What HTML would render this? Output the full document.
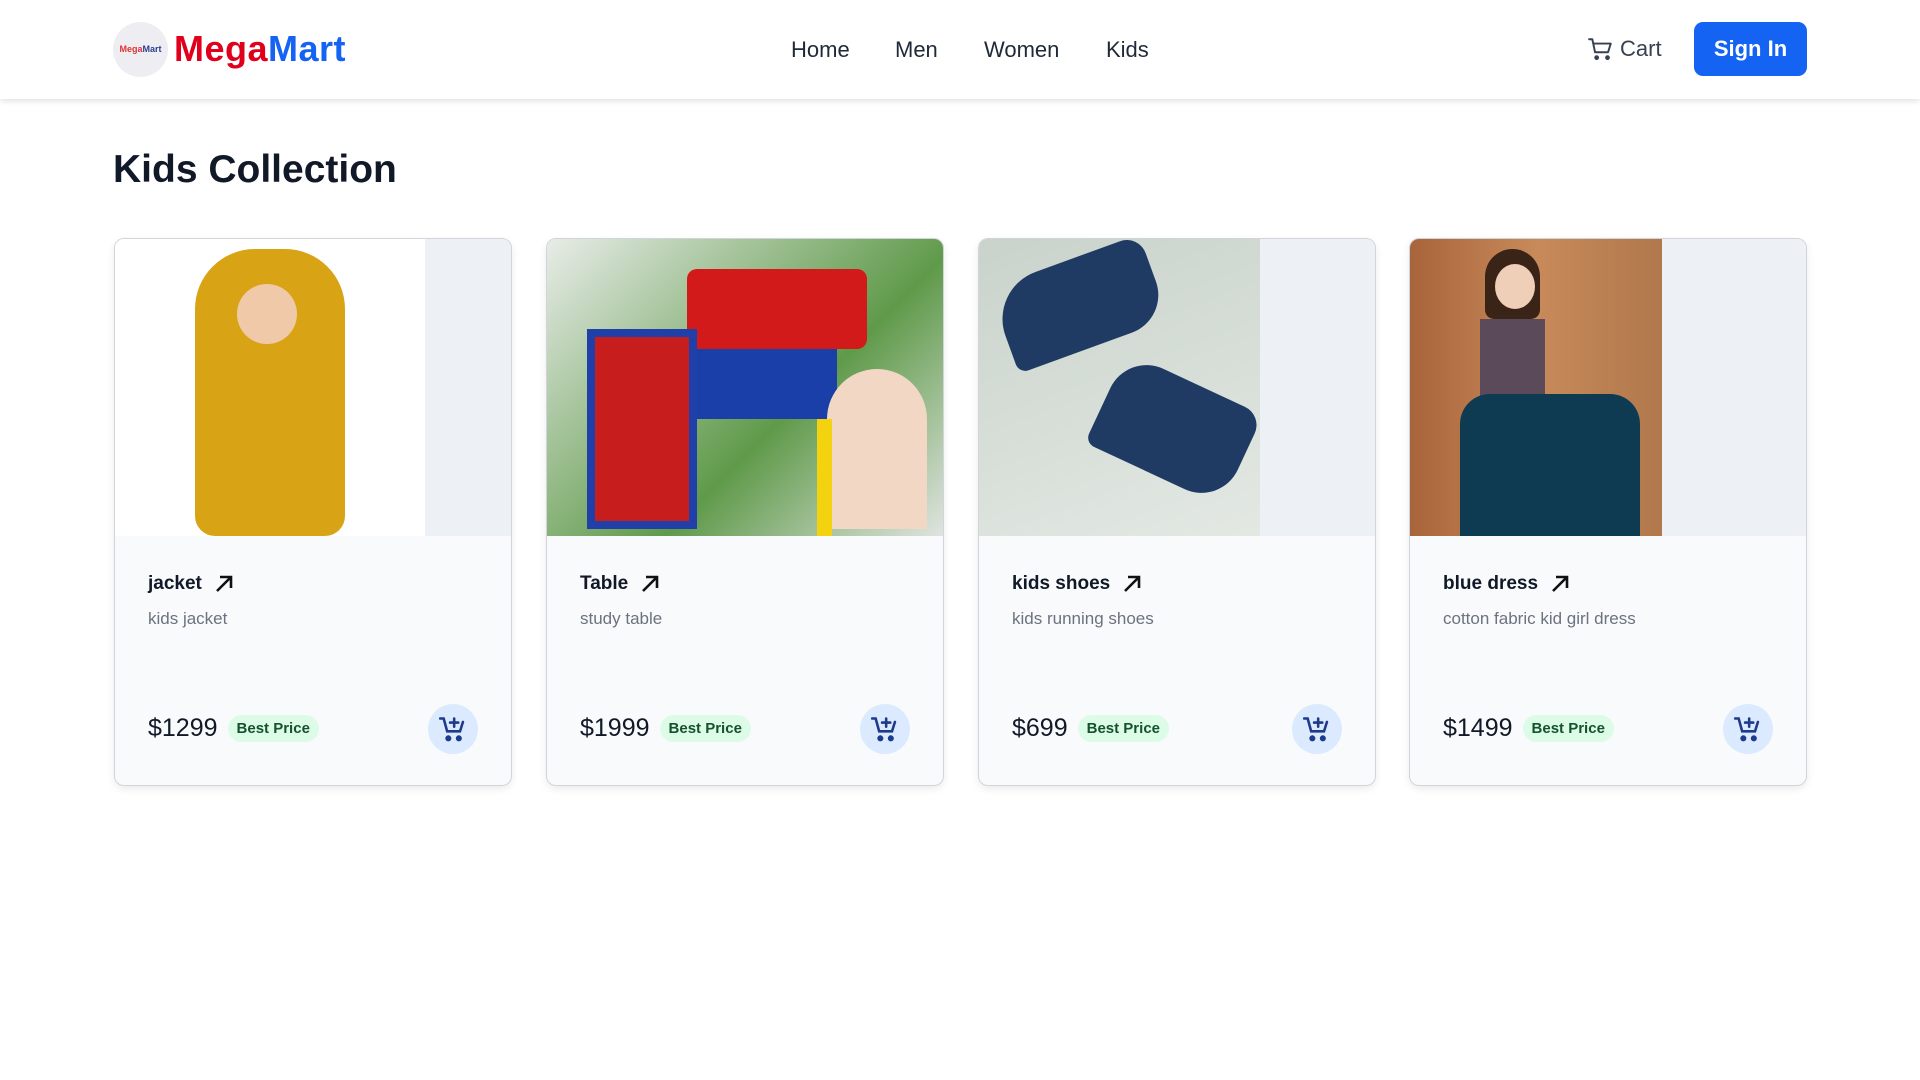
<!DOCTYPE html>
<html><head><meta charset="utf-8"><style>
*{box-sizing:border-box;margin:0;padding:0}
body{width:1920px;height:1080px;background:#fff;font-family:"Liberation Sans",sans-serif;position:relative;overflow:hidden;color:#111827}
.hdr{position:absolute;left:0;top:0;width:1920px;height:99px;background:#fff;box-shadow:0 2px 6px rgba(0,0,0,.12)}
.logo{position:absolute;left:113px;top:22px;width:55px;height:55px;border-radius:50%;background:#eeeef2;font-size:9px;font-weight:bold;line-height:55px;text-align:center;color:#d33}
.logo b{color:#2a3f8f}
.brand{position:absolute;left:174px;top:28px;font-size:36px;font-weight:bold;letter-spacing:0.5px}
.nav{position:absolute;top:37px;font-size:22px;color:#1f2937}
.cart{position:absolute;left:1588px;top:36px;font-size:22px;color:#374151;display:flex;align-items:center;gap:6px}
.sign{position:absolute;left:1694px;top:22px;width:113px;height:54px;border-radius:9px;background:#1463f3;color:#fff;font-size:22px;font-weight:bold;text-align:center;line-height:54px}
h1{position:absolute;left:113px;top:148px;font-size:39px;font-weight:600;color:#111827}
.card{position:absolute;top:238px;width:398px;height:548px;border:1px solid #d1d5db;border-radius:10px;background:#f9fafc;box-shadow:0 3px 8px rgba(0,0,0,.08);overflow:hidden}
.img{position:absolute;left:0;top:0;width:396px;height:297px;background:#edf1f6;overflow:hidden}
.t{position:absolute;left:33px;top:334px;font-size:19px;font-weight:bold;color:#111827;display:flex;align-items:center;gap:12px}
.d{position:absolute;left:33px;top:370px;font-size:17px;color:#6b7280}
.p{position:absolute;left:33px;top:475px;font-size:25px;color:#111827;display:flex;align-items:center;gap:10px}
.b{font-size:15px;font-weight:bold;background:#dcfce7;color:#14532d;border-radius:14px;padding:5px 9px}
.cb{position:absolute;left:313px;top:465px;width:50px;height:50px;border-radius:50%;background:#dbeafe;display:flex;align-items:center;justify-content:center}
</style></head><body>
<div class="hdr">
<div class="logo">Mega<b>Mart</b></div>
<div class="brand"><span style="color:#e0001b">Mega</span><span style="color:#1463f3">Mart</span></div>
<div class="nav" style="left:791px">Home</div>
<div class="nav" style="left:895px">Men</div>
<div class="nav" style="left:984px">Women</div>
<div class="nav" style="left:1106px">Kids</div>
<div class="cart"><svg width="26" height="26" viewBox="0 0 24 24" fill="none" stroke="#374151" stroke-width="1.8" stroke-linecap="round" stroke-linejoin="round"><path d="M1 3h3l2.5 12h12L21 7H5.5"/><circle cx="8" cy="20" r="1.3" fill="#374151"/><circle cx="18" cy="20" r="1.3" fill="#374151"/></svg>Cart</div>
<div class="sign">Sign In</div>
</div>
<h1>Kids Collection</h1>

<div class="card" style="left:114px">
<div class="img"><div style="position:absolute;left:0;top:0;width:310px;height:297px;background:#fff"></div>
<div style="position:absolute;left:80px;top:10px;width:150px;height:287px;background:#d9a316;border-radius:60px 60px 20px 20px"></div>
<div style="position:absolute;left:122px;top:45px;width:60px;height:60px;background:#f0c9a8;border-radius:50%"></div></div>
<div class="t">jacket <svg width="20" height="20" viewBox="0 0 20 20" stroke="#111" stroke-width="2.6" fill="none"><path d="M3 17L17 3M6 3h11v11"/></svg></div>
<div class="d">kids jacket</div>
<div class="p">$1299 <span class="b">Best Price</span></div>
<div class="cb"><svg width="28" height="28" viewBox="0 0 24 24" fill="none" stroke="#1e3a8a" stroke-width="2.2" stroke-linecap="round"><path d="M1 3h3l3 11h11l2.5-8"/><path d="M13 3v7M9.5 6.5h7"/><circle cx="8" cy="20" r="1.5" fill="#1e3a8a"/><circle cx="17" cy="20" r="1.5" fill="#1e3a8a"/></svg></div>
</div>

<div class="card" style="left:546px">
<div class="img" style="background:linear-gradient(135deg,#e8ece8,#5f9a4a 60%,#e0e4e0)">
<div style="position:absolute;left:140px;top:30px;width:180px;height:80px;background:#d21a1a;border-radius:10px"></div>
<div style="position:absolute;left:140px;top:110px;width:150px;height:70px;background:#1b3fa8"></div>
<div style="position:absolute;left:40px;top:90px;width:110px;height:200px;background:#c81d1d;border:8px solid #213fa8"></div>
<div style="position:absolute;left:280px;top:130px;width:100px;height:160px;background:#f1d7c4;border-radius:50px 50px 0 0"></div>
<div style="position:absolute;left:270px;top:180px;width:15px;height:117px;background:#f3d20f"></div></div>
<div class="t">Table <svg width="20" height="20" viewBox="0 0 20 20" stroke="#111" stroke-width="2.6" fill="none"><path d="M3 17L17 3M6 3h11v11"/></svg></div>
<div class="d">study table</div>
<div class="p">$1999 <span class="b">Best Price</span></div>
<div class="cb"><svg width="28" height="28" viewBox="0 0 24 24" fill="none" stroke="#1e3a8a" stroke-width="2.2" stroke-linecap="round"><path d="M1 3h3l3 11h11l2.5-8"/><path d="M13 3v7M9.5 6.5h7"/><circle cx="8" cy="20" r="1.5" fill="#1e3a8a"/><circle cx="17" cy="20" r="1.5" fill="#1e3a8a"/></svg></div>
</div>

<div class="card" style="left:978px">
<div class="img"><div style="position:absolute;left:0;top:0;width:281px;height:297px;background:linear-gradient(160deg,#c9d3cb,#e3e8e3)"></div>
<div style="position:absolute;left:20px;top:20px;width:160px;height:90px;background:#1f3a63;border-radius:50px 20px 40px 10px;transform:rotate(-20deg)"></div>
<div style="position:absolute;left:120px;top:140px;width:150px;height:100px;background:#1f3a63;border-radius:40px 20px 40px 10px;transform:rotate(25deg)"></div></div>
<div class="t">kids shoes <svg width="20" height="20" viewBox="0 0 20 20" stroke="#111" stroke-width="2.6" fill="none"><path d="M3 17L17 3M6 3h11v11"/></svg></div>
<div class="d">kids running shoes</div>
<div class="p">$699 <span class="b">Best Price</span></div>
<div class="cb"><svg width="28" height="28" viewBox="0 0 24 24" fill="none" stroke="#1e3a8a" stroke-width="2.2" stroke-linecap="round"><path d="M1 3h3l3 11h11l2.5-8"/><path d="M13 3v7M9.5 6.5h7"/><circle cx="8" cy="20" r="1.5" fill="#1e3a8a"/><circle cx="17" cy="20" r="1.5" fill="#1e3a8a"/></svg></div>
</div>

<div class="card" style="left:1409px">
<div class="img"><div style="position:absolute;left:0;top:0;width:252px;height:297px;background:linear-gradient(90deg,#a8643a,#c88a5a 50%,#b0784c)"></div>
<div style="position:absolute;left:75px;top:10px;width:55px;height:70px;background:#3a2418;border-radius:30px 30px 10px 10px"></div>
<div style="position:absolute;left:85px;top:25px;width:40px;height:45px;background:#efcfb8;border-radius:50%"></div>
<div style="position:absolute;left:70px;top:80px;width:65px;height:80px;background:#5a4a5a"></div>
<div style="position:absolute;left:50px;top:155px;width:180px;height:142px;background:#0f3b52;border-radius:30px 30px 0 0"></div></div>
<div class="t">blue dress <svg width="20" height="20" viewBox="0 0 20 20" stroke="#111" stroke-width="2.6" fill="none"><path d="M3 17L17 3M6 3h11v11"/></svg></div>
<div class="d">cotton fabric kid girl dress</div>
<div class="p">$1499 <span class="b">Best Price</span></div>
<div class="cb"><svg width="28" height="28" viewBox="0 0 24 24" fill="none" stroke="#1e3a8a" stroke-width="2.2" stroke-linecap="round"><path d="M1 3h3l3 11h11l2.5-8"/><path d="M13 3v7M9.5 6.5h7"/><circle cx="8" cy="20" r="1.5" fill="#1e3a8a"/><circle cx="17" cy="20" r="1.5" fill="#1e3a8a"/></svg></div>
</div>
</body></html>
